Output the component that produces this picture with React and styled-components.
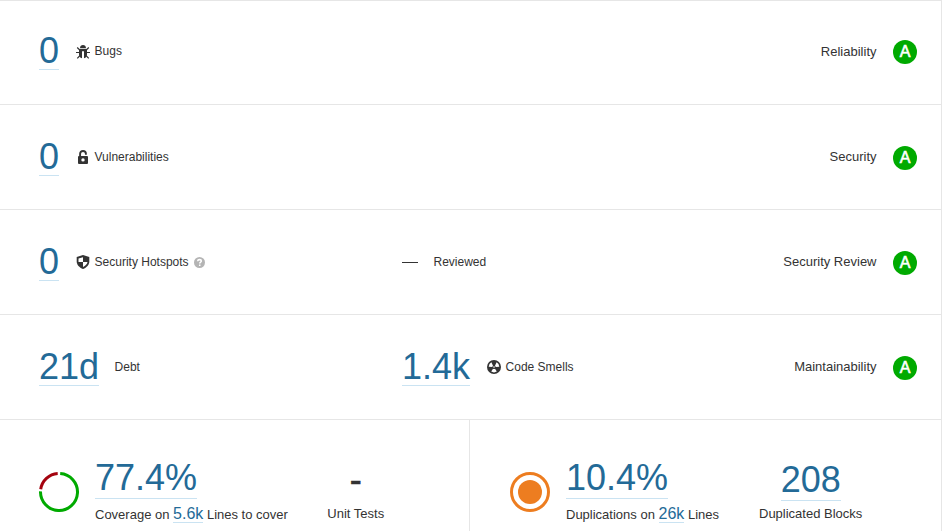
import React from "react";
import styled, { createGlobalStyle } from "styled-components";

const GlobalStyle = createGlobalStyle`
  * { box-sizing: border-box; }
  body { margin: 0; background: #fff; overflow: hidden; }
`;

const Panel = styled.main`
  width: 942px;
  height: 531px;
  overflow: hidden;
  border-top: 1px solid #e6e6e6;
  border-right: 1px solid #e6e6e6;
  color: #333;
  font: 13px/16px "Liberation Sans", Arial, sans-serif;
`;

const Row = styled.section`
  display: grid;
  grid-template-columns: 363px 1fr auto;
  align-items: start;
  height: ${(p) => p.$height || 105}px;
  padding: ${(p) => p.$top || 34}px 24px 0 39px;
  border-bottom: 1px solid #e6e6e6;
`;

const Measure = styled.div`
  display: flex;
  align-items: center;
  height: 37px;
`;

const BigNumber = styled.a`
  color: #236a97;
  font-size: 36px;
  height: 37px;
  line-height: ${(p) => (p.$raised ? 32 : 36)}px;
  border-bottom: 1px solid #cae3f2;
`;

const Label = styled.span`
  display: flex;
  align-items: center;
  margin: 0 0 2px ${(p) => p.$gap || 15.5}px;
  font-size: 12px;
  white-space: nowrap;
`;

const IconSlot = styled.span`
  display: flex;
  justify-content: center;
  width: 16px;
  margin: ${(p) => p.$top || 2}px 3.5px 0 -1px;
`;

const Help = styled.span`
  display: flex;
  margin: 1px 0 0 5px;
`;

const Dash = styled.span`
  width: 16px;
  height: 1px;
  background: #333;
`;

const Domain = styled.div`
  display: flex;
  align-items: center;
  gap: 16.5px;
  height: 37px;
`;

const DomainName = styled.span`
  margin-bottom: ${(p) => (p.$low ? 0 : 2)}px;
`;

const Rating = styled.span`
  width: 24px;
  height: 24px;
  margin-top: 1px;
  border-radius: 50%;
  background: #0a0;
  color: #fff;
  font-size: 16px;
  line-height: 24px;
  text-align: center;
  -webkit-text-stroke: 0.6px #fff;
`;

const Bottom = styled.div`
  display: grid;
  grid-template-columns: 470px 1fr;
  height: 111px;
`;

const Half = styled.section`
  display: flex;
  align-items: flex-start;
  padding-left: ${(p) => p.$left}px;
  border-right: ${(p) => (p.$divided ? "1px solid #e6e6e6" : "0")};
`;

const Gauge = styled.div`
  display: flex;
  margin: 52px 16px 0 0;
`;

const Summary = styled.div`
  display: flex;
  flex-direction: column;
  align-items: flex-start;
  padding-top: 42px;
`;

const Caption = styled.div`
  margin-top: 6px;
  line-height: 20px;
  white-space: nowrap;
`;

const InlineLink = styled.a`
  color: #236a97;
  font-size: 16px;
  line-height: 16px;
  display: inline-block;
  height: 17px;
  border-bottom: 1px solid #cae3f2;
`;

const Side = styled.div`
  display: flex;
  flex-direction: column;
  align-items: center;
  margin-left: ${(p) => p.$gap || 40}px;
  padding-top: 44px;
  gap: 5px;
  white-space: nowrap;
`;

const Empty = styled.span`
  height: 37px;
  font-size: 36px;
  line-height: 32px;
  -webkit-text-stroke: 0.6px #333;
`;

const BugIcon = () => (
  <svg width="14" height="14" viewBox="0 0 14 14">
    <path fill="#333" d="M4 3.200C4 1.200 5.300.1 7 .1s3 1.100 3 3.100zM3 4H11v5.200c0 2.200-1 3.600-3 4V6.300H6v6.900c-2-.4-3-1.800-3-4z" />
    <path fill="none" stroke="#333" strokeWidth="1.200" d="M1.200 2.500 3.500 4.700M12.800 2.500 10.500 4.700M0 7.500h3.500M14 7.500h-3.500M1.300 13.400l2.600-2.800M12.700 13.400l-2.600-2.800" />
  </svg>
);

const LockIcon = () => (
  <svg width="14" height="14" viewBox="0 0 14 14">
    <path fill="none" stroke="#333" strokeWidth="1.900" d="M4.100 7V3.800C4.100 2 5.300 1 7 1s2.900 1 2.900 2.800v.9" />
    <path fill="#333" fillRule="evenodd" d="M3 6h8q1 0 1 1v6q0 1-1 1H3q-1 0-1-1V7q0-1 1-1zm4 2.200a1.700 1.700 0 1 0 0 3.400 1.700 1.700 0 0 0 0-3.400z" />
  </svg>
);

const ShieldIcon = () => (
  <svg width="14" height="14" viewBox="0 0 14 14">
    <path fill="#333" d="M7 0 13.300 2v4.500c0 3.300-2.600 6-6.300 7.500C3.300 12.500.7 9.800.7 6.500V2z" />
    <path fill="#fff" d="M7 2.300V7H2.500V3.600zM7 7h4.500c-.3 2.100-2 3.800-4.500 5z" />
  </svg>
);

const SmellIcon = () => (
  <svg width="14" height="14" viewBox="0 0 14 14">
    <circle cx="7" cy="7" r="7" fill="#333" />
    <g fill="#fff">
      <path d="M6 5.700 4.400 2.300Q1.900 3.700 1.700 6.800L5.200 7Z" />
      <path d="M8 5.700 9.600 2.300Q12.100 3.700 12.300 6.800L8.800 7Z" />
      <path d="M6 8.700 4.200 11.600Q7 13.200 9.800 11.600L8 8.700Q7 9.300 6 8.700Z" />
      <circle cx="7" cy="7" r=".8" />
    </g>
  </svg>
);

const HelpIcon = () => (
  <svg width="11" height="11" viewBox="0 0 10 10">
    <circle cx="5" cy="5" r="5" fill="#b4b4b4" />
    <path fill="none" stroke="#fff" strokeWidth="1.400" d="M3.300 3.900C3.400 2.800 4 2.400 5 2.400s1.700.5 1.700 1.300C6.700 4.700 5.200 4.700 5.200 6M5.200 6.900v1.300" />
  </svg>
);

const CoverageRing = () => (
  <svg width="40" height="40" viewBox="0 0 40 40" fill="none" strokeWidth="3">
    <path stroke="#0a0" d="M21.200 1.540A18.500 18.500 0 1 1 1.510 19.400" />
    <path stroke="#a4030f" d="M1.700 17.300A18.500 18.500 0 0 1 18.700 1.540" />
  </svg>
);

const DuplicationDot = () => (
  <svg width="40" height="40" viewBox="0 0 40 40">
    <circle cx="20" cy="20" r="18.500" fill="none" stroke="#ed7d20" strokeWidth="3" />
    <circle cx="20" cy="20" r="12" fill="#ed7d20" />
  </svg>
);

const Score = ({ name, low }) => (
  <Domain>
    <DomainName $low={low}>{name}</DomainName>
    <Rating>A</Rating>
  </Domain>
);

const Metric = ({ value, icon, iconTop, label, children }) => (
  <Measure>
    <BigNumber>{value}</BigNumber>
    <Label $gap={icon ? 17 : 15.5}>
      {icon && <IconSlot $top={iconTop}>{icon}</IconSlot>}
      {label}
      {children}
    </Label>
  </Measure>
);

export default function App() {
  return (
    <>
      <GlobalStyle />
      <Panel>
        <Row $height={104} $top={32}>
          <Metric value="0" icon={<BugIcon />} label="Bugs" />
          <span />
          <Score name="Reliability" low />
        </Row>
        <Row>
          <Metric value="0" icon={<LockIcon />} iconTop={1} label="Vulnerabilities" />
          <span />
          <Score name="Security" />
        </Row>
        <Row>
          <Metric value="0" icon={<ShieldIcon />} iconTop={1} label="Security Hotspots">
            <Help><HelpIcon /></Help>
          </Metric>
          <Measure>
            <Dash />
            <Label>Reviewed</Label>
          </Measure>
          <Score name="Security Review" />
        </Row>
        <Row>
          <Metric value="21d" label="Debt" />
          <Metric value="1.4k" icon={<SmellIcon />} iconTop={1} label="Code Smells" />
          <Score name="Maintainability" />
        </Row>
        <Bottom>
          <Half $left={39} $divided>
            <Gauge><CoverageRing /></Gauge>
            <Summary>
              <BigNumber $raised>77.4%</BigNumber>
              <Caption>Coverage on <InlineLink>5.6k</InlineLink> Lines to cover</Caption>
            </Summary>
            <Side $gap={39.5}>
              <Empty>-</Empty>
              <span>Unit Tests</span>
            </Side>
          </Half>
          <Half $left={40}>
            <Gauge><DuplicationDot /></Gauge>
            <Summary>
              <BigNumber $raised>10.4%</BigNumber>
              <Caption>Duplications on <InlineLink>26k</InlineLink> Lines</Caption>
            </Summary>
            <Side>
              <BigNumber $raised>208</BigNumber>
              <span>Duplicated Blocks</span>
            </Side>
          </Half>
        </Bottom>
      </Panel>
    </>
  );
}
